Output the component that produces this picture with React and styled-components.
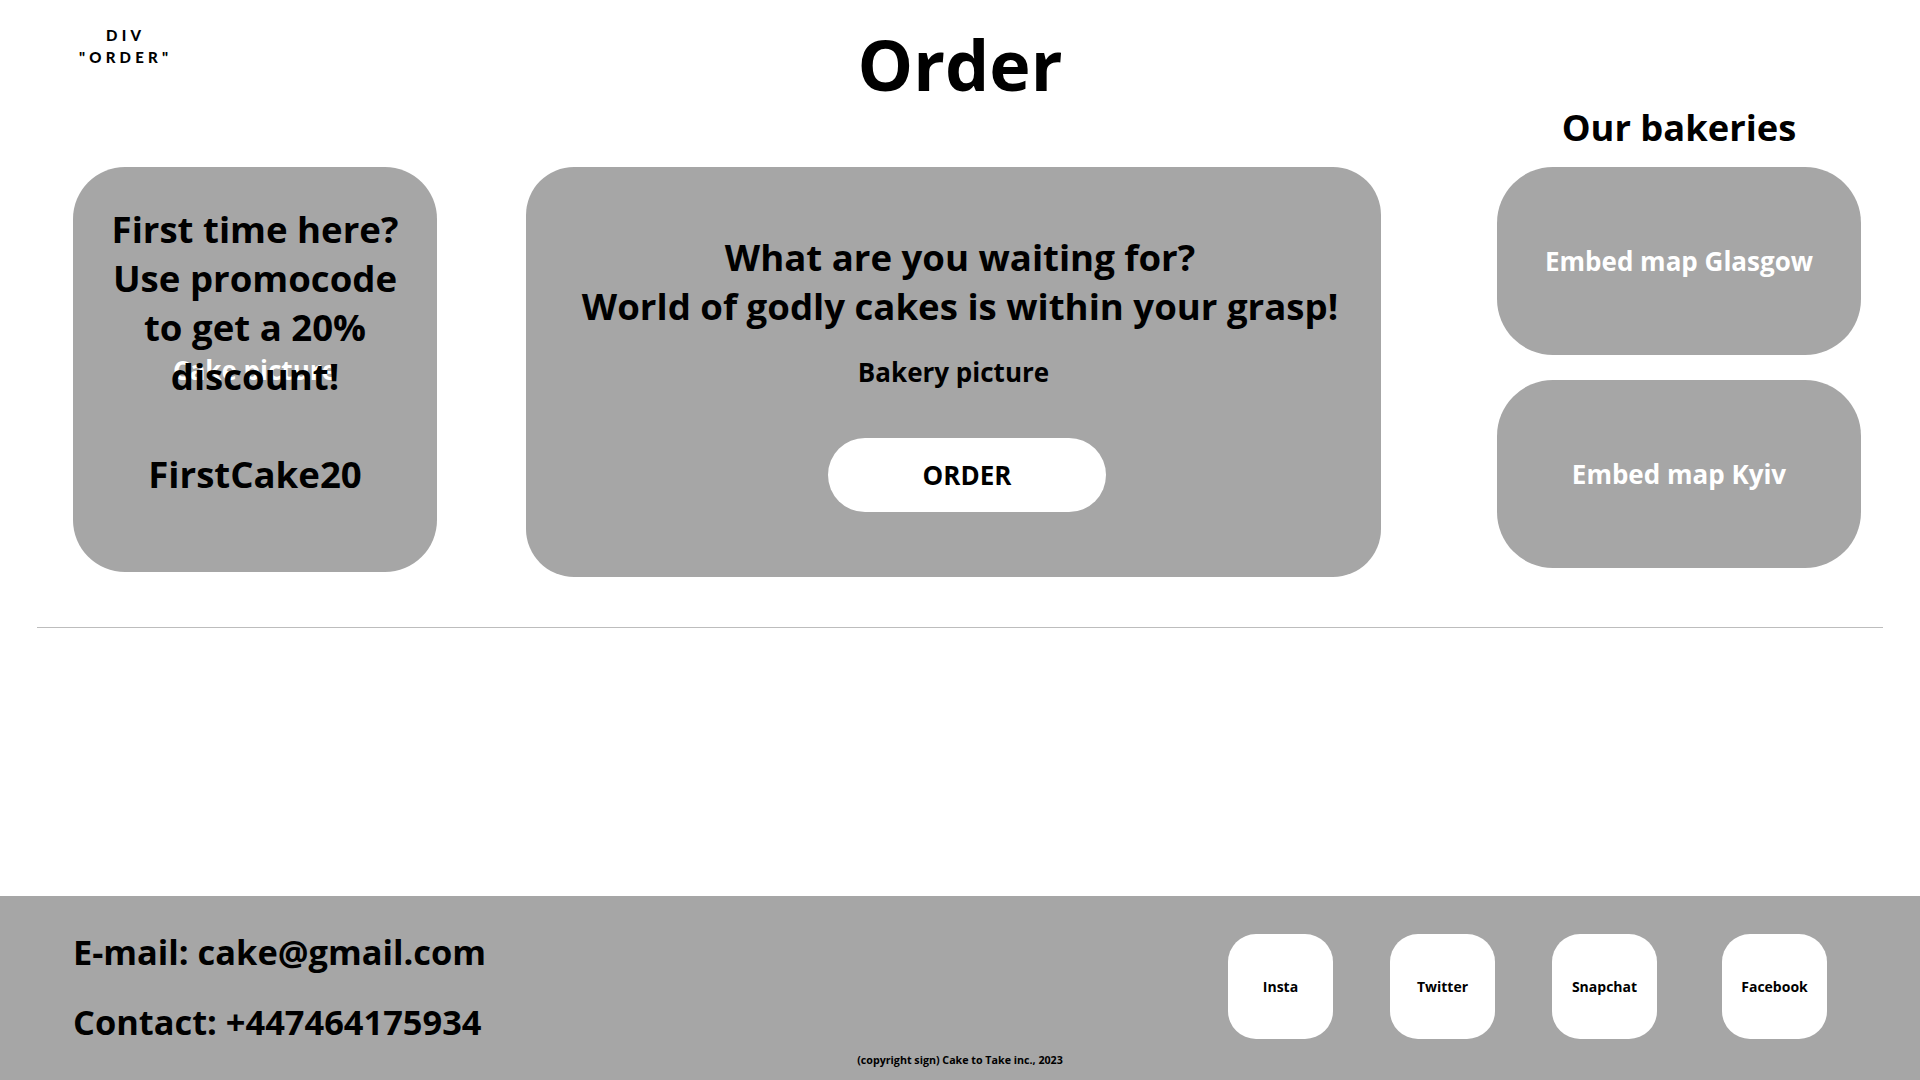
import React from 'react';
import styled, { createGlobalStyle } from 'styled-components';

const GlobalStyle = createGlobalStyle`
  * {
    box-sizing: border-box;
  }
  body {
    margin: 0;
    background: #ffffff;
    font-family: 'Open Sans', 'Liberation Sans', sans-serif;
    color: #000000;
  }
`;

const socials = [
  { name: 'Insta' },
  { name: 'Twitter' },
  { name: 'Snapchat' },
  { name: 'Facebook', extra: true },
];

const App = () => {
  return (
    <>
      <GlobalStyle />
      <StPage>
        <StHeader>
          <StLabel>
            DIV
            <br />
            "ORDER"
          </StLabel>
          <StTitle>Order</StTitle>
        </StHeader>

        <StMainRow>
          <StPromoCard>
            <StPictureLabel>Cake picture</StPictureLabel>
            <StPromoText>
              First time here?
              <br />
              Use promocode to get a 20% discount!
              <br />
              <br />
              FirstCake20
            </StPromoText>
          </StPromoCard>

          <StOrderCard>
            <StPictureLabel $dark>Bakery picture</StPictureLabel>
            <StOrderContent>
              <StOrderHeading>
                What are you waiting for?
                <br />
                World of godly cakes is within your grasp!
              </StOrderHeading>
              <StOrderButton>ORDER</StOrderButton>
            </StOrderContent>
          </StOrderCard>

          <StBakeries>
            <StBakeriesTitle>Our bakeries</StBakeriesTitle>
            <StMapCard>Embed map Glasgow</StMapCard>
            <StMapCard>Embed map Kyiv</StMapCard>
          </StBakeries>
        </StMainRow>

        <StDivider />

        <StFooter>
          <StFooterRow>
            <StContacts>
              <StContactLine>E-mail: cake@gmail.com</StContactLine>
              <StContactLine>Contact: +447464175934</StContactLine>
            </StContacts>
            <StSocials>
              {socials.map((s) => (
                <StSocialButton key={s.name} $extra={s.extra}>
                  {s.name}
                </StSocialButton>
              ))}
            </StSocials>
          </StFooterRow>
          <StCopyright>(copyright sign) Cake to Take inc., 2023</StCopyright>
        </StFooter>
      </StPage>
    </>
  );
};

export default App;

// 페이지

const StPage = styled.div`
  width: 1920px;
  height: 1080px;
  display: flex;
  flex-direction: column;
  overflow: hidden;
`;

// 헤더

const StHeader = styled.header`
  display: grid;
  grid-template-columns: 1fr auto 1fr;
  align-items: start;
  padding-top: 24px;
`;

const StLabel = styled.div`
  justify-self: start;
  margin-left: 79px;
  font-family: 'Lato', 'Liberation Sans', sans-serif;
  font-weight: 900;
  font-size: 15px;
  line-height: 22px;
  letter-spacing: 4.2px;
  text-align: center;
`;

const StTitle = styled.h1`
  margin: 5px 0 0;
  font-size: 70px;
  font-weight: 700;
  line-height: 70px;
`;

//------------------

const StMainRow = styled.main`
  display: flex;
  align-items: flex-start;
  padding: 3px 59px 0 73px;
`;

const StCard = styled.div`
  background: #a6a6a6;
  display: grid;
  margin-top: 65px;
  > * {
    grid-area: 1 / 1;
  }
`;

const StPromoCard = styled(StCard)`
  width: 364px;
  height: 405px;
  border-radius: 52px;
  justify-items: center;
`;

const StPictureLabel = styled.div`
  align-self: center;
  font-size: 26px;
  font-weight: 700;
  color: ${(props) => (props.$dark ? '#000000' : '#ffffff')};
`;

const StPromoText = styled.p`
  align-self: start;
  margin: 0;
  padding: 38px 26px 0;
  font-size: 36.6px;
  font-weight: 700;
  line-height: 49px;
  text-align: center;
`;

const StOrderCard = styled(StCard)`
  width: 855px;
  height: 410px;
  margin-left: 89px;
  border-radius: 48px;
  justify-items: center;
`;

const StOrderContent = styled.div`
  align-self: start;
  display: flex;
  flex-direction: column;
  align-items: center;
  padding: 66px 0 0 13px;
`;

const StOrderHeading = styled.h2`
  margin: 0;
  font-size: 36.6px;
  font-weight: 700;
  line-height: 49px;
  text-align: center;
  white-space: nowrap;
`;

const StOrderButton = styled.button`
  margin: 107px 0 0 14px;
  width: 278px;
  height: 74px;
  border: none;
  border-radius: 37px;
  background: #ffffff;
  font-family: inherit;
  font-size: 26px;
  font-weight: 700;
  color: #000000;
  cursor: pointer;
`;

const StBakeries = styled.section`
  margin-left: auto;
  width: 364px;
  display: flex;
  flex-direction: column;
  align-items: stretch;
`;

const StBakeriesTitle = styled.h2`
  margin: 0 0 15px;
  font-size: 36.3px;
  font-weight: 700;
  line-height: normal;
  text-align: center;
`;

const StMapCard = styled.div`
  height: 188px;
  border-radius: 56px;
  background: #a6a6a6;
  display: flex;
  justify-content: center;
  align-items: center;
  font-size: 26px;
  font-weight: 700;
  color: #ffffff;
  & + & {
    margin-top: 25px;
  }
`;

const StDivider = styled.hr`
  margin: 50px 37px 0;
  border: none;
  border-top: 1px solid #bdbdbd;
`;

// 푸터

const StFooter = styled.footer`
  margin-top: auto;
  height: 184px;
  background: #a6a6a6;
  display: flex;
  flex-direction: column;
  padding-top: 32px;
`;

const StFooterRow = styled.div`
  display: flex;
  align-items: flex-start;
  padding: 0 93px 0 73px;
`;

const StContacts = styled.div`
  display: flex;
  flex-direction: column;
  gap: 23px;
`;

const StContactLine = styled.p`
  margin: 0;
  font-size: 34.4px;
  font-weight: 700;
  line-height: normal;
`;

const StSocials = styled.div`
  margin: 6px 0 0 auto;
  display: flex;
  gap: 57px;
`;

const StSocialButton = styled.button`
  width: 105px;
  height: 105px;
  margin-left: ${(props) => (props.$extra ? '8px' : '0')};
  border: none;
  border-radius: 28px;
  background: #ffffff;
  font-family: inherit;
  font-size: 14px;
  font-weight: 700;
  color: #000000;
  cursor: pointer;
`;

const StCopyright = styled.p`
  margin: 8px 0 0;
  font-size: 10.7px;
  font-weight: 700;
  line-height: normal;
  text-align: center;
`;
